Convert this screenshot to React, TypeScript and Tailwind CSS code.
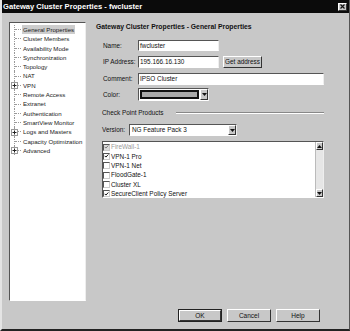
import React from "react";

const treeItems = [
  { label: "General Properties", plus: false, selected: true },
  { label: "Cluster Members", plus: false },
  { label: "Availability Mode", plus: false },
  { label: "Synchronization", plus: false },
  { label: "Topology", plus: false },
  { label: "NAT", plus: false },
  { label: "VPN", plus: true },
  { label: "Remote Access", plus: false },
  { label: "Extranet", plus: false },
  { label: "Authentication", plus: false },
  { label: "SmartView Monitor", plus: false },
  { label: "Logs and Masters", plus: true },
  { label: "Capacity Optimization", plus: false },
  { label: "Advanced", plus: true },
];

const products = [
  { label: "FireWall-1", checked: true, disabled: true },
  { label: "VPN-1 Pro", checked: true },
  { label: "VPN-1 Net", checked: false },
  { label: "FloodGate-1", checked: false },
  { label: "Cluster XL", checked: false },
  { label: "SecureClient Policy Server", checked: true },
];

const sunken = "border-t border-l border-t-[#555] border-l-[#555] border-b border-r border-b-white border-r-[#eee]";
const raised = "border-t border-l border-t-white border-l-white border-b border-r border-b-[#333] border-r-[#333]";

const Arrow = ({ up = false }: { up?: boolean }) => (
  <svg width="5" height="3" viewBox="0 0 5 3" className={up ? "rotate-180" : ""}>
    <path d="M0 0h5L2.5 3z" fill="#111" />
  </svg>
);

const Check = ({ gray = false }: { gray?: boolean }) => (
  <svg width="6" height="6" viewBox="0 0 6 6">
    <path d="M0.8 2.8 2.3 4.3 5.2 1.2" stroke={gray ? "#777" : "#111"} strokeWidth="1.2" fill="none" />
  </svg>
);

const Button = ({ label, isDefault = false }: { label: string; isDefault?: boolean }) => (
  <div className={`w-[44px] h-[13px] ${isDefault ? "border border-[#222]" : ""}`}>
    <div className={`w-full h-full ${raised} flex items-center justify-center text-[6.5px] text-[#111]`}>{label}</div>
  </div>
);

export default function App() {
  return (
    <div className="w-[350px] h-[331px] bg-[#c8c8c8] flex flex-col overflow-hidden border-b-2 border-[#222] border-r border-r-[#555] border-l-2 border-l-[#e4e4e4]" style={{ fontFamily: '"Liberation Sans", Arial, sans-serif' }}>
      {/* Title bar */}
      <div className="h-[13px] bg-[#0b0b0b] flex items-center justify-between pl-[1px] pr-[2px] shrink-0">
        <span className="text-white font-bold text-[7.6px] leading-none">Gateway Cluster Properties - fwcluster</span>
        <div className={`w-[9px] h-[8px] bg-[#c8c8c8] ${raised} flex items-center justify-center`}>
          <svg width="5" height="5" viewBox="0 0 5 5">
            <path d="M0.5 0.5 4.5 4.5M4.5 0.5 0.5 4.5" stroke="#111" strokeWidth="1.2" />
          </svg>
        </div>
      </div>

      <div className="flex flex-1">
        {/* Tree */}
        <div className="pl-[7px] pt-[9px]">
          <div className={`w-[77px] h-[279px] bg-white ${sunken} pt-[2px]`}>
            {treeItems.map((item) => (
              <div key={item.label} className="flex h-[9.3px] items-stretch">
                <div className="ml-[4px] w-[8px] border-l border-dotted border-[#999] relative flex items-center">
                  <div className="w-[6px] border-t border-dotted border-[#999]" />
                  {item.plus && (
                    <div className="absolute -left-[4px] top-[1.5px] w-[7px] h-[7px] bg-white border border-[#999] flex items-center justify-center">
                      <svg width="5" height="5" viewBox="0 0 5 5">
                        <path d="M0.5 2.5h4M2.5 0.5v4" stroke="#222" strokeWidth="1" />
                      </svg>
                    </div>
                  )}
                </div>
                <span className={`text-[6.1px] leading-[9.3px] px-[1px] text-[#1a1a1a] whitespace-nowrap ${item.selected ? "bg-[#cdcdcd]" : ""}`}>
                  {item.label}
                </span>
              </div>
            ))}
          </div>
        </div>

        {/* Right pane */}
        <div className="flex-1 pl-[10px] pr-[25px] flex flex-col text-[6.4px] text-[#111]">
          <div className="mt-[9px] h-[10px] leading-[10px] font-bold text-[6.8px]">Gateway Cluster Properties - General Properties</div>

          <div className="mt-[8px] h-[11px] flex items-center">
            <span className="w-[42px] pl-[7px]">Name:</span>
            <div className={`w-[81px] h-full bg-white ${sunken} flex items-center pl-[1px]`}>fwcluster</div>
          </div>

          <div className="mt-[5px] h-[12px] flex items-center">
            <span className="w-[42px] pl-[7px] whitespace-nowrap">IP Address:</span>
            <div className={`w-[81px] h-full bg-white ${sunken} flex items-center pl-[1px]`}>195.166.16.130</div>
            <div className={`ml-[4px] w-[39px] h-full ${raised} flex items-center justify-center`}>Get address</div>
          </div>

          <div className="mt-[5px] h-[12px] flex items-center">
            <span className="w-[42px] pl-[7px]">Comment:</span>
            <div className={`flex-1 h-full bg-white ${sunken} flex items-center pl-[1px]`}>IPSO Cluster</div>
          </div>

          <div className="mt-[3px] h-[13px] flex items-center">
            <span className="w-[42px] pl-[7px]">Color:</span>
            <div className={`w-[71px] h-full bg-white ${sunken} flex items-stretch`}>
              <div className="flex-1 m-[1px] border-2 border-[#111] bg-[#a9a9a9]" />
              <div className={`w-[8px] bg-[#c8c8c8] ${raised} flex items-center justify-center`}>
                <Arrow />
              </div>
            </div>
          </div>

          <div className="mt-[7px] h-[10px] flex items-center pl-[6px]">
            <span className="whitespace-nowrap">Check Point Products</span>
            <div className="flex-1 ml-[13px] border-t border-t-[#888] border-b border-b-white" />
          </div>

          <div className="mt-[6px] h-[12px] flex items-center">
            <span className="w-[33px] pl-[6px]">Version:</span>
            <div className={`w-[108px] h-full bg-white ${sunken} flex items-center`}>
              <span className="flex-1 pl-[2px]">NG Feature Pack 3</span>
              <div className={`w-[8px] h-full bg-[#c8c8c8] ${raised} flex items-center justify-center`}>
                <Arrow />
              </div>
            </div>
          </div>

          <div className={`mt-[5px] ml-[6px] h-[57px] bg-white ${sunken} flex`}>
            <div className="flex-1 pt-[0.5px]">
              {products.map((p) => (
                <div key={p.label} className="h-[9.3px] flex items-center">
                  <div className={`w-[7px] h-[7px] ${p.disabled ? "bg-[#ddd]" : "bg-white"} border-t border-l border-[#555] border-b border-r border-b-[#ccc] border-r-[#ccc] flex items-center justify-center`}>
                    {p.checked && <Check gray={p.disabled} />}
                  </div>
                  <span className={`ml-[1px] ${p.disabled ? "text-[#9a9a9a]" : ""}`}>{p.label}</span>
                </div>
              ))}
            </div>
            <div className="w-[8px] bg-[#e6e6e6] border-l border-[#bbb] flex flex-col justify-between">
              <div className={`h-[8px] bg-[#c8c8c8] ${raised} flex items-center justify-center`}>
                <Arrow up />
              </div>
              <div className={`h-[8px] bg-[#c8c8c8] ${raised} flex items-center justify-center`}>
                <Arrow />
              </div>
            </div>
          </div>

          <div className="mt-[111px] flex gap-[5px] pl-[82px]">
            <Button label="OK" isDefault />
            <Button label="Cancel" />
            <Button label="Help" />
          </div>
        </div>
      </div>
    </div>
  );
}
